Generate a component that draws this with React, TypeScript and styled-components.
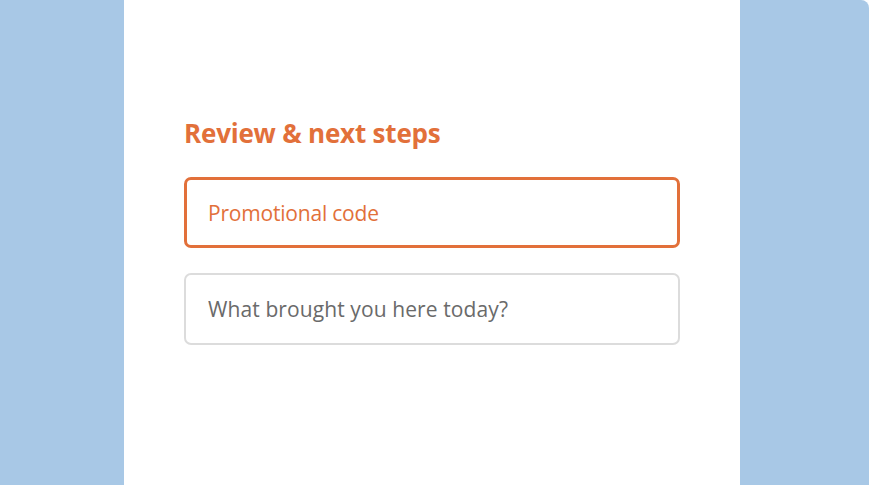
import React from "react";
import styled, { createGlobalStyle } from "styled-components";

const Global = createGlobalStyle`
  html, body { margin: 0; padding: 0; background: #fbfdff; }
  body { font-family: "Open Sans", "Liberation Sans", sans-serif; }
  * { box-sizing: border-box; }
`;

const Page = styled.div`
  width: 869px;
  height: 485px;
  background: #a8c8e6;
  border-top-right-radius: 8px;
  overflow: hidden;
  display: flex;
  padding-left: 124px;
`;

const Panel = styled.main`
  width: 616px;
  height: 100%;
  background: #ffffff;
  padding: 114px 60px 0;
  display: flex;
  flex-direction: column;
`;

const Heading = styled.h2`
  margin: 0 0 25px;
  font-family: "Open Sans", sans-serif;
  font-weight: 700;
  font-size: 26px;
  line-height: 38px;
  color: #e2703a;
  letter-spacing: -0.2px;
`;

const Fields = styled.div`
  display: flex;
  flex-direction: column;
  gap: 25px;
`;

const Field = styled.input<{ $active?: boolean }>`
  width: 496px;
  height: ${(p) => (p.$active ? "71px" : "72px")};
  border-radius: 7px;
  border: ${(p) => (p.$active ? "3px solid #e2703a" : "2px solid #dcdcdc")};
  padding: 0 ${(p) => (p.$active ? "21px" : "22px")};
  font-family: "Open Sans", sans-serif;
  font-size: 21px;
  letter-spacing: ${(p) => (p.$active ? "-0.2px" : "0.1px")};
  background: #fff;
  outline: none;
  &::placeholder {
    color: ${(p) => (p.$active ? "#e2703a" : "#6a6a6a")};
    opacity: 1;
  }
`;

export default function App() {
  return (
    <>
      <Global />
      <Page>
        <Panel>
          <Heading>Review &amp; next steps</Heading>
          <Fields>
            <Field $active placeholder="Promotional code" />
            <Field placeholder="What brought you here today?" />
          </Fields>
        </Panel>
      </Page>
    </>
  );
}
